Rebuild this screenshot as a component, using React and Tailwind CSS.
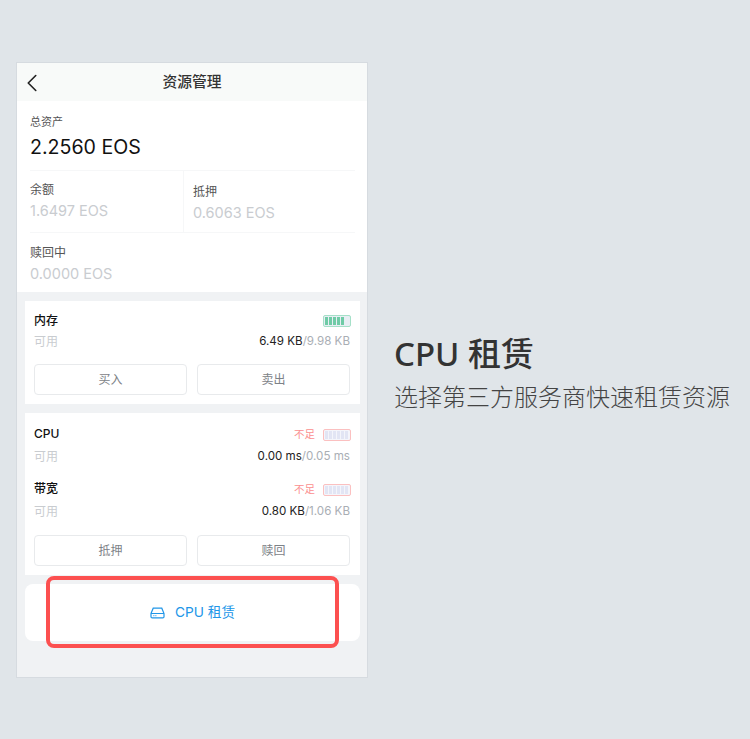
import { ChevronLeft } from "lucide-react";

const Battery = ({ level, tone }) => {
  const green = tone === "green";
  return (
    <div className={`-mr-[1px] flex h-[12px] w-[28px] gap-[1px] rounded-[2px] border p-[1px] ${green ? "border-[#a5e0c8] bg-[#e8eef4]" : "border-[#fbc0c0] bg-[#f4f5fb]"}`}>
      {Array.from({ length: 6 }).map((_, i) => (
        <span key={i} className={`h-full w-[3px] ${green ? (i < level ? "bg-[#6fcba6]" : "") : "bg-[#e2e5f4]"}`} />
      ))}
    </div>
  );
};

const Stat = ({ label, value, className }) => (
  <div className={className}>
    <div className="text-[12px] leading-[16px] text-[#555]">{label}</div>
    <div className="mt-[3px] text-[14.5px] leading-[20px] text-[#c9ccd0]">{value}</div>
  </div>
);

const OutlineButton = ({ children }) => (
  <button className="h-[31px] flex-1 rounded-[4px] border border-[#e8eaec] bg-white text-[12px] text-[#7d8287]">{children}</button>
);

const ResourceRow = ({ name, warn, level, tone, used, total, gap, className }) => (
  <div className={className}>
    <div className="flex h-[18px] items-center justify-between">
      <span className="text-[12px] font-medium text-[#111]">{name}</span>
      <div className={`flex items-center gap-[8px] ${warn ? "mt-[2px]" : ""}`}>
        {warn && <span className="text-[10.5px] text-[#fb8f8f]">不足</span>}
        <Battery level={level} tone={tone} />
      </div>
    </div>
    <div className={`${gap} flex h-[18px] items-center justify-between`}>
      <span className="text-[12px] text-[#c9ccd0]">可用</span>
      <span className="text-[11.6px] text-[#222]">
        {used}
        <span className="text-[#a9aeb4]">/{total}</span>
      </span>
    </div>
  </div>
);

export default function App() {
  return (
    <div className="flex h-[739px] w-[750px] bg-[#e0e5e9] pl-[16px] pt-[62px] font-['Inter','Noto_Sans_CJK_SC',sans-serif]">
      <div className="relative flex h-[616px] w-[352px] shrink-0 flex-col border border-[#d6dbe0] bg-[#f0f2f4]">
        <div className="relative flex h-[38px] shrink-0 items-center justify-center bg-[#f8faf9]">
          <ChevronLeft className="absolute left-0 top-[5px] text-[#222]" size={30} strokeWidth={1.3} />
          <span className="pt-[1px] text-[14.800px] font-medium text-[#333]">资源管理</span>
        </div>

        <div className="h-[191px] shrink-0 bg-white pl-[13px] pr-[12px]">
          <div className="h-[70px] border-b border-[#f6f7f8] pt-[13px]">
            <div className="text-[11px] leading-[16px] text-[#555]">总资产</div>
            <div className="mt-[4px] text-[19.600px] leading-[26px] text-[#111]">2.2560 EOS</div>
          </div>
          <div className="flex h-[62px] border-b border-[#f6f7f8]">
            <Stat label="余额" value="1.6497 EOS" className="w-[154px] border-r border-[#f6f7f8] pt-[11px]" />
            <Stat label="抵押" value="0.6063 EOS" className="pl-[9px] pt-[13px]" />
          </div>
          <Stat label="赎回中" value="0.0000 EOS" className="pt-[12px]" />
        </div>

        <div className="ml-[8px] mr-[7px] mt-[9px] h-[103px] shrink-0 bg-white pl-[9px] pr-[10px] pt-[11px]">
          <ResourceRow name="内存" level={5} tone="green" used="6.49 KB" total="9.98 KB" gap="mt-[3px]" />
          <div className="mt-[13px] flex gap-[10px]">
            <OutlineButton>买入</OutlineButton>
            <OutlineButton>卖出</OutlineButton>
          </div>
        </div>

        <div className="ml-[8px] mr-[7px] mt-[9px] h-[162px] shrink-0 bg-white pl-[9px] pr-[10px] pt-[12px]">
          <ResourceRow name="CPU" warn level={0} tone="red" used="0.00 ms" total="0.05 ms" gap="mt-[5px]" />
          <ResourceRow name="带宽" warn level={0} tone="red" used="0.80 KB" total="1.06 KB" gap="mt-[5px]" className="mt-[14px]" />
          <div className="mt-[14px] flex gap-[10px]">
            <OutlineButton>抵押</OutlineButton>
            <OutlineButton>赎回</OutlineButton>
          </div>
        </div>

        <div className="ml-[8px] mr-[7px] mt-[9px] flex h-[57px] shrink-0 items-center justify-center gap-[10px] rounded-[8px] bg-white text-[13.700px] text-[#2196e8]">
          <svg width="15" height="12" viewBox="0 0 15 12" fill="none" stroke="currentColor" strokeWidth="1.2">
            <path d="M1 6.5 3.2 1.2h8.6L14 6.5v3.2a1.2 1.2 0 0 1-1.2 1.2H2.2A1.2 1.2 0 0 1 1 9.700z" />
            <path d="M1 6.500h13M3.500 8.700h.8M5.500 8.700h.8" />
          </svg>
          <span>CPU 租赁</span>
        </div>

        <div className="absolute left-[29px] top-[513px] h-[72px] w-[293px] rounded-[8px] border-[4px] border-[#fc5050]" />
      </div>

      <div className="pl-[26px] pt-[269px] font-['Noto_Sans','Noto_Sans_CJK_SC',sans-serif]">
        <div className="text-[33px] font-medium leading-[46px] text-[#333]">CPU 租赁</div>
        <div className="mt-[4px] whitespace-nowrap text-[24px] font-light leading-[32px] text-[#444]">选择第三方服务商快速租赁资源</div>
      </div>
    </div>
  );
}
